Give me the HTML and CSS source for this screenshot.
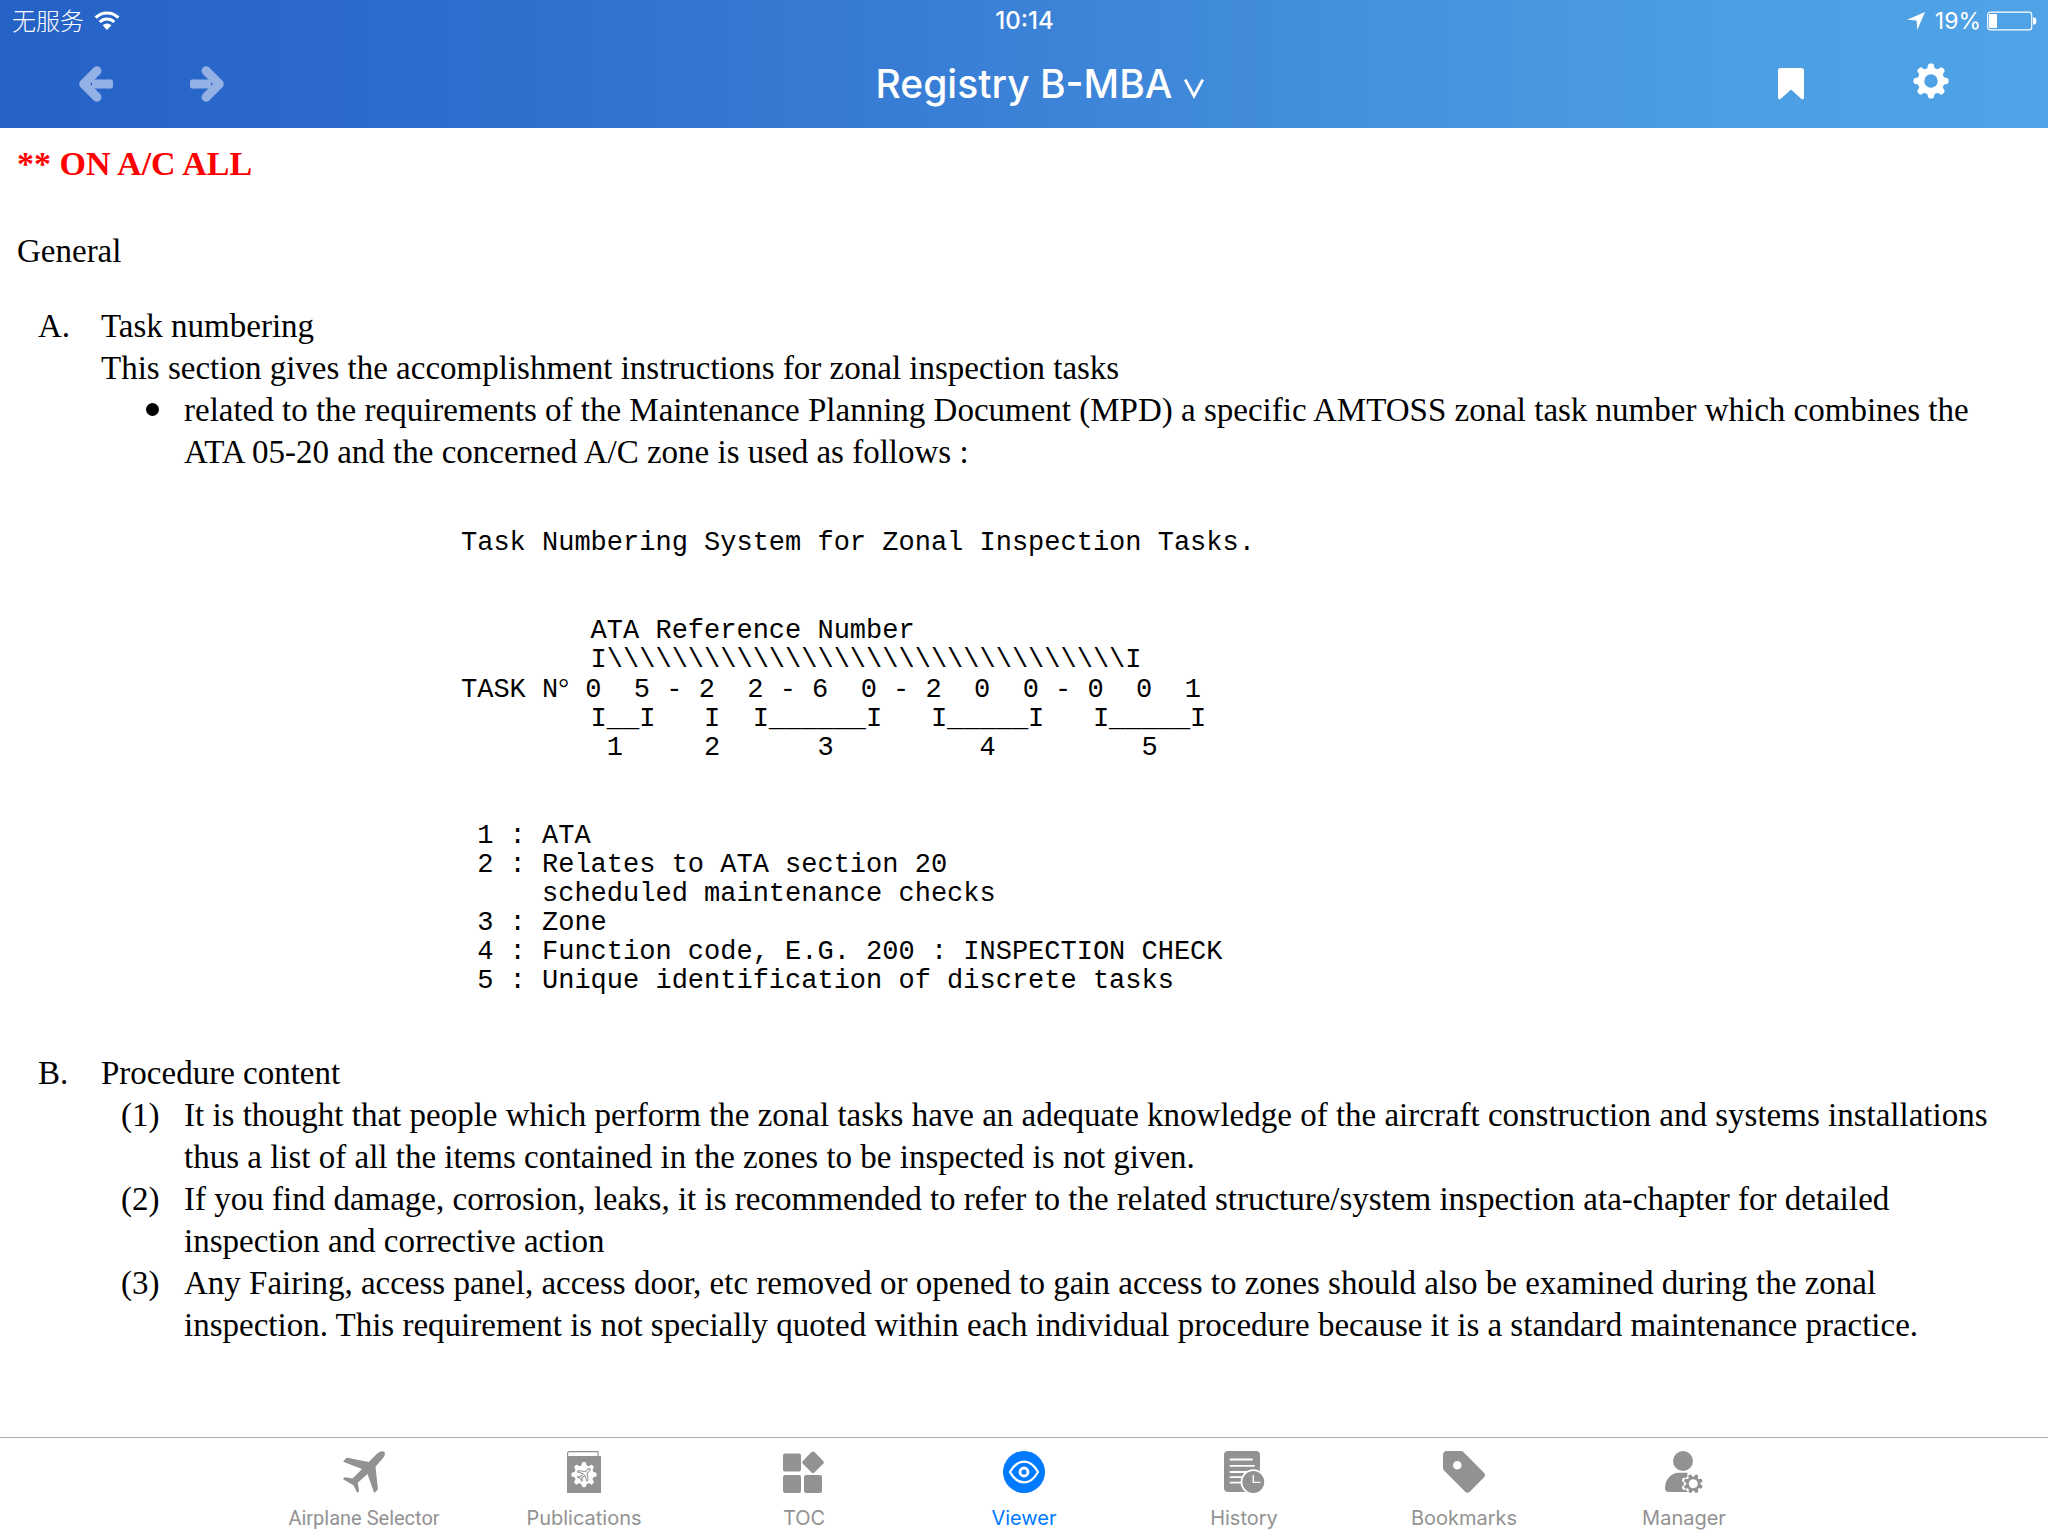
FILE: index.html
```html
<!DOCTYPE html>
<html lang="en">
<head>
<meta charset="utf-8">
<meta name="viewport" content="width=device-width, initial-scale=1">
<title>Registry B-MBA</title>
<link rel="stylesheet" href="styles.css">
</head>
<body>
<header class="topbar">
  <div class="status">
    <div class="status-side">
      <span class="carrier" lang="zh">无服务</span>
      <svg class="wifi" width="26" height="20" viewBox="0 0 26 20" fill="none" stroke="#fff" stroke-width="3">
        <path d="M1.6 6.6a16.2 16.2 0 0 1 22.8 0"/>
        <path d="M5.7 11a10.4 10.4 0 0 1 14.6 0"/>
        <path d="M8.6 14.3a6.3 6.3 0 0 1 8.8 0L13 19z" fill="#fff" stroke="none"/>
      </svg>
    </div>
    <time class="clock">10:14</time>
    <div class="status-side status-right">
      <svg class="location" width="18" height="18" viewBox="0 0 18 18" fill="#fff"><path d="M18 0 10.3 18 9.6 8.4 0 7.7z"/></svg>
      <span class="percent">19%</span>
      <svg class="battery" width="50" height="20" viewBox="0 0 50 20">
        <rect x=".7" y="1.2" width="44" height="17.6" rx="2.6" fill="none" stroke="#fff" stroke-width="1.2"/>
        <rect x="2" y="3" width="8" height="14" rx="1" fill="#fff"/>
        <path d="M46 6.5h1a2.4 2.4 0 0 1 2.3 2.3v2.4a2.4 2.4 0 0 1-2.3 2.3h-1z" fill="#fff"/>
      </svg>
    </div>
  </div>
  <div class="toolbar">
    <div class="tools tools-left">
      <button class="tool" type="button" aria-label="Back">
        <svg width="34" height="36" viewBox="0 0 34 36" fill="none" stroke="#93b1e4" stroke-width="9" stroke-linecap="round" stroke-linejoin="round"><path d="M18 4.8 4.7 18 18 31.2"/><path d="M13 18h18" stroke-linecap="butt"/><rect x="28" y="13.5" width="6" height="9" rx="2" fill="#93b1e4" stroke="none"/></svg>
      </button>
      <button class="tool" type="button" aria-label="Forward">
        <svg width="34" height="36" viewBox="0 0 34 36" fill="none" stroke="#93b1e4" stroke-width="9" stroke-linecap="round" stroke-linejoin="round"><path d="M16 4.8 29.3 18 16 31.2"/><path d="M21 18H3" stroke-linecap="butt"/><rect x="0" y="13.5" width="6" height="9" rx="2" fill="#93b1e4" stroke="none"/></svg>
      </button>
    </div>
    <button class="title" type="button">Registry B-MBA
      <svg class="chevron" width="20" height="20" viewBox="0 0 20 20" fill="none" stroke="#fff" stroke-width="2.8"><path d="M1.200 .6 10 17 18.800 .6"/></svg>
    </button>
    <div class="tools tools-right">
      <button class="tool" type="button" aria-label="Add bookmark">
        <svg width="26" height="32" viewBox="0 0 26 32" fill="#fff"><path d="M2.5 0h21A2.5 2.5 0 0 1 26 2.5v27c0 1.8-1.6 2.3-2.8 1.2L13 21.6 2.8 30.7C1.600 31.800 0 31.300 0 29.500v-27A2.500 2.500 0 0 1 2.500 0z"/></svg>
      </button>
      <button class="tool" type="button" aria-label="Settings">
        <svg width="36" height="42" viewBox="-18 -18 36 42" fill="#fff">
          <defs><path id="teeth" d="M-3-15.500a2 2 0 0 1 2-2h2a2 2 0 0 1 2 2l1 4h-8zM-3 15.500a2 2 0 0 0 2 2h2a2 2 0 0 0 2-2l1-4h-8z"/></defs>
          <circle r="10" fill="none" stroke="#fff" stroke-width="6.600"/>
          <use href="#teeth"/><use href="#teeth" transform="rotate(45)"/><use href="#teeth" transform="rotate(90)"/><use href="#teeth" transform="rotate(135)"/>
        </svg>
      </button>
    </div>
  </div>
</header>

<main class="page">
  <p class="effectivity">** ON A/C ALL</p>
  <h1 class="heading">General</h1>
  <section class="section">
    <span>A.</span>
    <div>
      <h2 class="heading">Task numbering</h2>
      <p>This section gives the accomplishment instructions for zonal inspection tasks</p>
      <ul class="items">
        <li class="item"><span class="bullet"></span><span>related to the requirements of the Maintenance Planning Document (MPD) a specific AMTOSS zonal task number which combines the ATA 05-20 and the concerned A/C zone is used as follows :</span></li>
      </ul>
      <div class="figure">
<pre>Task Numbering System for Zonal Inspection Tasks.</pre>
<pre><span>        ATA Reference Number
        I\\\\\\\\\\\\\\\\\\\\\\\\\\\\\\\\I</span>
<span>TASK N</span><span class="degree">°</span><span> 0  5 - 2  2 - 6  0 - 2  0  0 - 0  0  1</span>
<span>        I__I   I  I______I   I_____I   I_____I
         1     2      3         4         5</span></pre>
<pre> 1 : ATA
 2 : Relates to ATA section 20
     scheduled maintenance checks
 3 : Zone
 4 : Function code, E.G. 200 : INSPECTION CHECK
 5 : Unique identification of discrete tasks</pre>
      </div>
    </div>
  </section>
  <section class="section">
    <span>B.</span>
    <div>
      <h2 class="heading">Procedure content</h2>
      <ol class="items">
        <li class="item"><span>(1)</span><span>It is thought that people which perform the zonal tasks have an adequate knowledge of the aircraft construction and systems installations thus a list of all the items contained in the zones to be inspected is not given.</span></li>
        <li class="item"><span>(2)</span><span>If you find damage, corrosion, leaks, it is recommended to refer to the related structure/system inspection ata-chapter for detailed inspection and corrective action</span></li>
        <li class="item"><span>(3)</span><span>Any Fairing, access panel, access door, etc removed or opened to gain access to zones should also be examined during the zonal inspection. This requirement is not specially quoted within each individual procedure because it is a standard maintenance practice.</span></li>
      </ol>
    </div>
  </section>
</main>

<nav class="tabbar">
  <div class="tabs">
    <a class="tab" href="#selector">
      <svg width="42" height="42" viewBox="0 0 42 42" fill="currentColor"><path d="M33.700 3C36 .8 39.500-.6 41.200.8S41.300 6 39 8.300L32.500 15.800 34.900 37.500Q34.900 38.700 34 39.500L31.900 41.400Q31.200 41.900 30.800 41L24.500 23 14.800 31.800 16 39Q16.200 40 15.600 40.700L14.700 41.600Q14.200 42 13.900 41.300L10.400 34.300.6 28.600Q0 28.200.4 27.600L1.300 26.600Q1.800 26.200 2.500 26.300L9.500 27.500 19 18 .8 11.100Q.1 10.800.6 10.100L2.900 7.300Q3.500 6.600 4.500 6.700L25.700 11z"/></svg>
      <span class="label label-long">Airplane Selector</span>
    </a>
    <a class="tab" href="#publications">
      <svg width="42" height="42" viewBox="-4 0 42 42" fill="currentColor">
        <path d="M.6 6V2.500Q.6.6 2.500.6H31V6" fill="none" stroke="currentColor" stroke-width="1.200"/>
        <path d="M0 5h34v37H0z"/>
        <g transform="translate(17 23.700) scale(.72)" fill="#fff">
          <circle r="13.500"/><use href="#teeth"/><use href="#teeth" transform="rotate(45)"/><use href="#teeth" transform="rotate(90)"/><use href="#teeth" transform="rotate(135)"/>
        </g>
        <path transform="translate(10.500 17.500) scale(.3)" fill="#fff" stroke="currentColor" stroke-width="3.400" d="M33.700 3C36 .8 39.500-.6 41.200.8S41.300 6 39 8.300L32.500 15.800 34.900 37.500 31.500 41.900 24.500 23 14.800 31.800 16 39 14.500 42 10.400 34.300 0 28.200 1.300 26.600 9.500 27.500 19 18 0 10.600 3.500 6.600 25.700 11z"/>
      </svg>
      <span class="label">Publications</span>
    </a>
    <a class="tab" href="#toc">
      <svg width="42" height="42" viewBox="0 0 42 42" fill="currentColor"><rect y="2.500" width="18" height="18" rx="2"/><rect y="24" width="18" height="18" rx="2"/><rect x="21" y="24" width="18" height="18" rx="2"/><rect x="-8.200" y="-8.200" width="16.400" height="16.400" rx="2" transform="translate(30 11.300) rotate(45)"/></svg>
      <span class="label">TOC</span>
    </a>
    <a class="tab tab-active" href="#viewer" aria-current="page">
      <svg width="42" height="42" viewBox="0 0 42 42" fill="none" stroke="#fff" stroke-width="2.200"><circle cx="21" cy="21" r="21" fill="currentColor" stroke="none"/><path d="M7 21C10 15.500 14.500 10.600 21 10.600S32 15.500 35 21C32 26.500 27.500 31.400 21 31.400S10 26.500 7 21z"/><circle cx="21" cy="21" r="4" stroke-width="2.800"/></svg>
      <span class="label">Viewer</span>
    </a>
    <a class="tab" href="#history">
      <svg width="42" height="42" viewBox="-1 0 42 42" fill="none" stroke="#fff" stroke-width="1.800"><rect width="36" height="41" rx="4" fill="currentColor" stroke="none"/><path d="M5.700 8.500h23M5.700 14.800h25M5.700 21h18M5.700 26.200h13M5.700 31.700h12"/><circle cx="29.300" cy="31" r="11.800" fill="currentColor"/><path d="M29.300 24v7.400h7.200" stroke-width="1.400"/></svg>
      <span class="label">History</span>
    </a>
    <a class="tab" href="#bookmarks">
      <svg width="42" height="42" viewBox="0 0 42 42" fill="currentColor"><path fill-rule="evenodd" d="M4 0h13.500Q19.300 0 20.600 1.300L41 21.700Q43 24 41 26.300L26.800 40.700Q24.500 42.600 22.200 40.700L1.300 19.800Q0 18.500 0 16.700V4Q0 0 4 0zM14.300 10a4.300 4.300 0 1 0 0 8.600 4.300 4.300 0 0 0 0-8.600z"/></svg>
      <span class="label">Bookmarks</span>
    </a>
    <a class="tab" href="#manager">
      <svg width="42" height="42" viewBox="-2 0 42 42" fill="currentColor"><circle cx="18" cy="10" r="10"/><path d="M14 21.700h8.500L25 24V41H4Q0 41 0 37C0 29 5.500 21.700 14 21.700z"/>
        <g transform="translate(28.300 32.700) rotate(22)">
          <g transform="scale(.68)" fill="#fff"><circle r="14"/><use href="#teeth"/><use href="#teeth" transform="rotate(45)"/><use href="#teeth" transform="rotate(90)"/><use href="#teeth" transform="rotate(135)"/></g>
          <g transform="scale(.55)"><circle r="10.500" fill="none" stroke="currentColor" stroke-width="4.600"/><use href="#teeth"/><use href="#teeth" transform="rotate(45)"/><use href="#teeth" transform="rotate(90)"/><use href="#teeth" transform="rotate(135)"/></g>
        </g>
      </svg>
      <span class="label">Manager</span>
    </a>
  </div>
</nav>
</body>
</html>
```
FILE: styles.css
```css
* {
  box-sizing: border-box;
}

body {
  margin: 0;
  min-height: 100vh;
  display: flex;
  flex-direction: column;
  background: #fff;
  color: #000;
  font-family: "Liberation Serif", "Times New Roman", serif;
  font-size: 33px;
  line-height: 42px;
}

p, pre, ul, ol, h1, h2 {
  margin: 0;
  padding: 0;
}

button {
  border: 0;
  padding: 0;
  background: none;
  color: inherit;
  font: inherit;
}

svg {
  display: block;
  flex: none;
}

/* Top bar */

.topbar {
  background: linear-gradient(90deg, #2562c6 0%, #2d6dcd 22%, #3a80d6 48%, #4592dd 68%, #4d9ee3 85%, #50a3e6 100%);
  color: #fff;
  font-family: Inter, "Noto Sans CJK SC", sans-serif;
}

.status,
.toolbar {
  display: grid;
  grid-template-columns: 1fr auto 1fr;
  align-items: center;
}

.status {
  height: 41px;
  padding: 0 11px 0 12px;
  font-size: 24px;
  line-height: 28px;
}

.status-side {
  display: flex;
  align-items: center;
  gap: 10px;
}

.status-right {
  justify-content: flex-end;
}

.carrier {
  padding-bottom: 2px;
  font-family: "Noto Sans CJK SC", sans-serif;
  font-weight: 300;
}

.clock {
  font-weight: 500;
}

.percent {
  margin-right: -4px;
  font-size: 23px;
}

.toolbar {
  height: 87px;
  padding-bottom: 2px;
}

.tools {
  display: flex;
  align-items: center;
}

.tools-left {
  gap: 77px;
  padding-left: 79px;
}

.tools-right {
  justify-content: flex-end;
  gap: 109px;
  padding-right: 99px;
}

.title {
  display: flex;
  align-items: center;
  gap: 12px;
  padding-left: 32px;
  font-size: 39px;
  font-weight: 500;
}

.chevron {
  margin-top: 10px;
}

/* Document */

.page {
  flex: 1;
  padding: 15px 32px 56px 17px;
}

.effectivity {
  margin-bottom: 45px;
  color: #f00;
  font-size: 34px;
  font-weight: bold;
}

.heading {
  font-size: inherit;
  font-weight: normal;
}

.section {
  display: grid;
  grid-template-columns: 63px 1fr;
  margin-top: 33px;
  padding-left: 21px;
}

.section + .section {
  margin-top: 56px;
}

.items {
  padding-left: 20px;
  list-style: none;
}

.item {
  display: grid;
  grid-template-columns: 63px 1fr;
}

.bullet {
  width: 13px;
  height: 13px;
  margin-top: 14px;
  border-radius: 50%;
  background: #000;
  justify-self: center;
}

.figure {
  display: grid;
  gap: 59px;
  margin-top: 56px;
  padding-left: 360px;
}

pre {
  font-family: "Liberation Mono", "Courier New", monospace;
  font-size: 27px;
  line-height: 29px;
}

.degree {
  font-family: "Liberation Serif", serif;
  line-height: 1;
}

/* Tab bar */

.tabbar {
  border-top: 1px solid #adadad;
  background: #fff;
  font-family: Inter, sans-serif;
  font-size: 20px;
  line-height: 24px;
}

.tabs {
  display: grid;
  grid-template-columns: repeat(7, 1fr);
  max-width: 1540px;
  margin: 0 auto;
  padding: 13px 0 6px;
}

.tab {
  display: flex;
  flex-direction: column;
  align-items: center;
  gap: 13px;
  color: #929292;
  text-decoration: none;
}

.tab-active {
  color: #007aff;
}

.label-long {
  font-family: Roboto, sans-serif;
}
```
